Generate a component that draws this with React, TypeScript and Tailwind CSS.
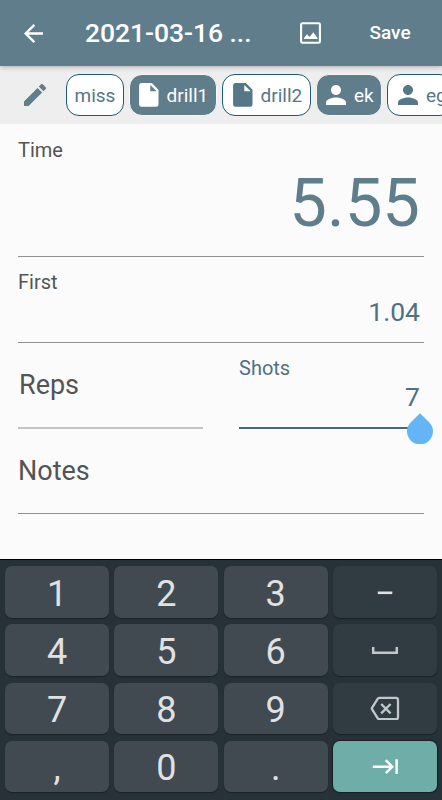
import React from 'react';

const FileIcon = () => (
  <svg viewBox="0 0 20 24" className="w-5 h-6 shrink-0" fill="currentColor">
    <path d="M2.6 0H12.8L19.5 6.7V21.2A2.5 2.5 0 0 1 17 23.7H2.6A2.5 2.5 0 0 1 .1 21.2V2.5A2.5 2.5 0 0 1 2.6 0ZM11.3 1.9V8.2H17.7Z" fillRule="evenodd" />
  </svg>
);

const PersonIcon = () => (
  <svg viewBox="4 4 16 16" className="w-5 h-5 shrink-0" fill="currentColor">
    <path d="M12 12c2.21 0 4-1.79 4-4s-1.79-4-4-4-4 1.79-4 4 1.79 4 4 4zm0 2c-2.67 0-8 1.34-8 4v2h16v-2c0-2.66-5.33-4-8-4z" />
  </svg>
);

const chips = [
  { label: 'miss', icon: null, active: false, width: 'w-[57.5px]', pad: 'pl-[7.5px]', gap: '' },
  { label: 'drill1', icon: FileIcon, active: true, width: 'w-[88px]', pad: 'pl-[9px]', gap: 'gap-2' },
  { label: 'drill2', icon: FileIcon, active: false, width: 'w-[89.5px]', pad: 'pl-[10px]', gap: 'gap-2' },
  { label: 'ek', icon: PersonIcon, active: true, width: 'w-[66px]', pad: 'pl-[9px]', gap: 'gap-2' },
  { label: 'eg', icon: PersonIcon, active: false, width: 'w-[66px]', pad: 'pl-[10px]', gap: 'gap-2' },
];

const MinusIcon = () => (
  <svg viewBox="0 0 30 24" className="w-[30px] h-6" fill="none" stroke="#e0e1e3" strokeWidth="2.6">
    <path d="M7.8 12.8H22.3" />
  </svg>
);

const SpaceIcon = () => (
  <svg viewBox="0 0 30 24" className="w-[30px] h-6" fill="none" stroke="#c3c7ca" strokeWidth="2.5">
    <path d="M3.2 9V14.8H26.8V9" />
  </svg>
);

const BackspaceIcon = () => (
  <svg viewBox="0 0 30 24" className="w-[30px] h-6" fill="none" stroke="#c3c7ca" strokeWidth="2.3" strokeLinejoin="round">
    <path d="M9.2 1.9H26A2 2 0 0 1 28 3.9V21.2A2 2 0 0 1 26 23.2H9.2Q8.2 23.2 7.6 22.2L2 13.2Q1.6 12.5 2 11.8L7.6 2.9Q8.2 1.9 9.2 1.9Z" />
    <path d="M11.2 8L20.6 17.4M20.6 8L11.2 17.4" />
  </svg>
);

const TabIcon = () => (
  <svg viewBox="0 0 30 24" className="w-[30px] h-6" fill="none" stroke="#ffffff" strokeWidth="2.4">
    <path d="M2.8 11.7H22.2M15.8 5.2L22.3 11.7L15.8 18.2M26.6 4.3V19.1" />
  </svg>
);

const keys = [
  '1', '2', '3', MinusIcon,
  '4', '5', '6', SpaceIcon,
  '7', '8', '9', BackspaceIcon,
  ',', '0', '.', TabIcon,
];

const Header = () => (
  <header className="relative z-10 flex items-center h-[66px] shrink-0 bg-[#607d8b] text-white shadow-[0_1px_5px_rgba(0,0,0,0.28)]">
    <svg viewBox="4 4 16 16" className="w-[19px] h-[19px] ml-[23.5px]" fill="currentColor">
      <path d="M20 11H7.83l5.59-5.59L12 4l-8 8 8 8 1.41-1.41L7.83 13H20v-2z" />
    </svg>
    <h1 className="ml-[42.5px] w-[215px] text-[26.5px] leading-8 font-medium tracking-[-0.05px] whitespace-nowrap">2021-03-16 ...</h1>
    <svg viewBox="0 0 21 22" className="w-[21px] h-[22px]" fill="none">
      <rect x="1.1" y="1.3" width="18.8" height="19.4" rx="1.2" stroke="currentColor" strokeWidth="2.1" />
      <path d="M4 17V16L7 12.2L9.5 14.9L13.3 10.2L17.5 16V17Z" fill="currentColor" />
    </svg>
    <button className="ml-[48.5px] text-[19px] leading-6 font-medium">Save</button>
  </header>
);

const Chips = () => (
  <div className="flex items-center gap-[5px] h-[58px] shrink-0 bg-[#eeeeee] overflow-hidden">
    <svg viewBox="3 3 18 18" className="w-[22px] h-[22px] ml-6 mr-[15px] shrink-0" fill="#607d8b">
      <path d="M3 17.25V21h3.75L17.81 9.94l-3.75-3.75L3 17.25zM20.71 7.04c.39-.39.39-1.02 0-1.41l-2.34-2.34c-.39-.39-1.02-.39-1.41 0l-1.83 1.83 3.75 3.75 1.83-1.83z" />
    </svg>
    {chips.map((chip) => (
      <div
        key={chip.label}
        className={`flex items-center shrink-0 h-[42px] rounded-[13px] border text-[19px] ${chip.width} ${chip.pad} ${chip.gap} ${
          chip.active ? 'bg-[#607d8b] border-[#f8f8f8] text-white' : 'bg-white border-[#1d5a73] text-[#557787]'
        }`}
      >
        {chip.icon && <chip.icon />}
        <span className="pt-[2px]">{chip.label}</span>
      </div>
    ))}
  </div>
);

const Form = () => (
  <main className="flex flex-col h-[435px] shrink-0 px-[18px] bg-[#fbfbfb] text-[#545454]">
    <section className="h-[133px] border-b border-[#929292]">
      <div className="pt-[14px] text-[20px] leading-6">Time</div>
      <div className="pr-1 text-right text-[67px] leading-[82px] text-[#5f7e8c]">5.55</div>
    </section>
    <section className="h-[86px] border-b border-[#929292]">
      <div className="pt-[13px] text-[20px] leading-6">First</div>
      <div className="pr-1 pt-[2px] text-right text-[26.5px] leading-8 text-[#4f7182]">1.04</div>
    </section>
    <div className="flex justify-between h-[86px]">
      <section className="w-[185px] h-[86px] border-b-2 border-[#c4c4c4] pt-[26px] pl-px text-[27px] leading-8">Reps</section>
      <section className="relative w-[185px] h-[86px] border-b-2 border-[#3f6c80] text-[#4f7182]">
        <div className="pt-[13px] text-[20px] leading-6">Shots</div>
        <div className="pr-1 pt-px text-right text-[26.5px] leading-8">7</div>
        {/* text cursor handle */}
        <svg viewBox="0 0 26 31" className="absolute right-[-9px] top-[70px] w-[26px] h-[31px]" fill="#64b5f6">
          <path d="M13 .2L22.4 9.4A13 13 0 1 1 3.6 9.4Z" />
        </svg>
      </section>
    </div>
    <section className="h-[85px] border-b border-[#929292] pt-[26px] text-[27px] leading-8">Notes</section>
  </main>
);

const Keyboard = () => (
  <div className="grid grid-cols-4 auto-rows-[51.5px] gap-x-[5.2px] gap-y-[6.8px] h-[241px] px-[5px] pt-[6px] bg-[#263238] border-t border-black">
    {keys.map((Key, i) => {
      const color =
        i === 15
          ? 'bg-[#6fada8] shadow-[0_0_1px_1px_rgba(10,20,25,0.6)]'
          : i % 4 === 3
            ? 'bg-[#313b42] shadow-[0_1px_1px_rgba(0,0,0,0.35)]'
            : 'bg-[#424a51] shadow-[0_1px_1px_rgba(0,0,0,0.35)]';
      return (
        <button key={i} className={`flex items-center justify-center rounded-[7px] text-[36px] leading-none text-[#e0e1e3] ${color}`}>
          {typeof Key === 'string' ? <span className="pt-[3.5px]">{Key}</span> : <Key />}
        </button>
      );
    })}
  </div>
);

const App: React.FC = () => {
  return (
    <div className="flex flex-col w-[442px] h-[800px] overflow-hidden font-[Roboto,sans-serif]">
      <Header />
      <Chips />
      <Form />
      <Keyboard />
    </div>
  );
};

export default App;
